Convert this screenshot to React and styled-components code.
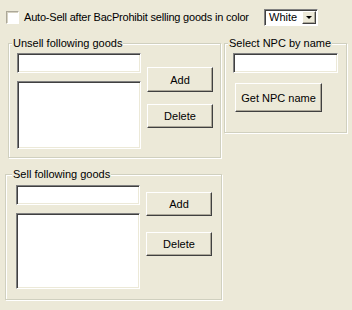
import React from 'react';
import styled, { createGlobalStyle } from 'styled-components';

const GlobalStyle = createGlobalStyle`
  html, body {
    margin: 0;
    padding: 0;
    background: #ece9d8;
  }
  body {
    font-family: "Liberation Sans", Arial, sans-serif;
    font-size: 11px;
    color: #000;
  }
`;

const Window = styled.div`
  width: 352px;
  height: 310px;
  background: #ece9d8;
  display: flex;
  flex-direction: column;
  box-sizing: border-box;
  overflow: hidden;
`;

const TopRow = styled.div`
  display: flex;
  align-items: center;
  height: 18px;
  margin-top: 8px;
  padding-left: 6px;
`;

const CheckBox = styled.div`
  flex-shrink: 0;
  width: 11px;
  height: 11px;
  background: #fff;
  border-top: 1px solid #aca899;
  border-left: 1px solid #aca899;
  border-right: 1px solid #fff;
  border-bottom: 1px solid #fff;
  box-shadow: inset 1px 1px 0 #d6d2c2;
`;

const Label = styled.span`
  flex-shrink: 0;
  margin-left: 5px;
  width: 240px;
  white-space: nowrap;
  font-size: 11px;
  letter-spacing: -0.2px;
`;

const Combo = styled.div`
  flex-shrink: 0;
  width: 48px;
  height: 15px;
  background: #fff;
  border-top: 1px solid #808080;
  border-left: 1px solid #808080;
  border-right: 1px solid #fff;
  border-bottom: 1px solid #fff;
  box-shadow: inset 1px 1px 0 #404040;
  display: flex;
  align-items: center;
  justify-content: space-between;
  padding-left: 4px;
`;

const ComboArrow = styled.div`
  width: 14px;
  height: 13px;
  margin: 1px 1px 0 0;
  background: #ece9d8;
  box-sizing: border-box;
  border-top: 1px solid #fff;
  border-left: 1px solid #fff;
  border-right: 1px solid #404040;
  border-bottom: 1px solid #404040;
  box-shadow: inset -1px -1px 0 #aca899;
  display: flex;
  align-items: center;
  justify-content: center;
  &::after {
    content: '';
    border-left: 3px solid transparent;
    border-right: 3px solid transparent;
    border-top: 3px solid #000;
  }
`;

const MiddleRow = styled.div`
  display: flex;
  align-items: flex-start;
  margin-top: 17px;
`;

const Group = styled.div`
  position: relative;
  box-sizing: border-box;
  width: ${p => p.$w}px;
  height: ${p => p.$h}px;
  margin-left: ${p => p.$left}px;
  margin-top: ${p => p.$top || 0}px;
  border: 1px solid #d0d0bf;
  box-shadow: inset 1px 1px 0 #fff, 1px 1px 0 #fff;
  padding: ${p => p.$pad};
  display: flex;
  gap: ${p => p.$gap || 0}px;
`;

const Legend = styled.span`
  position: absolute;
  top: -8px;
  left: ${p => p.$x}px;
  padding: 0 1px;
  background: #ece9d8;
  font-size: 11px;
  line-height: 14px;
  white-space: nowrap;
`;

const Column = styled.div`
  display: flex;
  flex-direction: column;
  align-items: flex-start;
  gap: ${p => p.$gap}px;
  padding-top: ${p => p.$top || 0}px;
`;

const Sunken = styled.div`
  box-sizing: border-box;
  width: ${p => p.$w}px;
  height: ${p => p.$h}px;
  background: #fff;
  border-top: 1px solid #808080;
  border-left: 1px solid #808080;
  border-right: 1px solid #fff;
  border-bottom: 1px solid #fff;
  box-shadow: inset 1px 1px 0 #404040, inset -1px -1px 0 #ece9d8;
`;

const Button = styled.button`
  box-sizing: border-box;
  width: ${p => p.$w}px;
  height: ${p => p.$h}px;
  margin: 0 0 0 ${p => p.$indent || 0}px;
  padding: 0;
  background: #ece9d8;
  border-top: 1px solid #fff;
  border-left: 1px solid #fff;
  border-right: 1px solid #404040;
  border-bottom: 1px solid #404040;
  box-shadow: inset -1px -1px 0 #aca899;
  font-family: "Liberation Sans", Arial, sans-serif;
  font-size: 11px;
  color: #000;
`;

const GoodsGroup = ({ title, w, h, left, top, pad, legendX, inputW, listH, gapList, btnLeft, btnTop, btnGap, addH }) => (
  <Group $w={w} $h={h} $left={left} $top={top} $pad={pad} $gap={btnLeft}>
    <Legend $x={legendX}>{title}</Legend>
    <Column $gap={gapList}>
      <Sunken $w={inputW} $h={20} />
      <Sunken $w={inputW} $h={listH} />
    </Column>
    <Column $gap={btnGap} $top={btnTop}>
      <Button $w={66} $h={addH}>Add</Button>
      <Button $w={66} $h={24}>Delete</Button>
    </Column>
  </Group>
);

const App = () => (
  <Window>
    <GlobalStyle />
    <TopRow>
      <CheckBox />
      <Label>Auto-Sell after BacProhibit selling goods in color</Label>
      <Combo>
        White
        <ComboArrow />
      </Combo>
    </TopRow>
    <MiddleRow>
      <GoodsGroup
        title="Unsell following goods"
        w={213} h={115} left={8} pad="9px 0 0 8px" legendX={3}
        inputW={124} listH={68} gapList={8}
        btnLeft={6} btnTop={14} btnGap={12} addH={25}
      />
      <Group $w={123} $h={90} $left={3} $pad="9px 0 0 8px">
        <Legend $x={3}>Select NPC by name</Legend>
        <Column $gap={10}>
          <Sunken $w={105} $h={20} />
          <Button $w={87} $h={29} $indent={2}>Get NPC name</Button>
        </Column>
      </Group>
    </MiddleRow>
    <GoodsGroup
      title="Sell following goods"
      w={217} h={126} left={5} top={16} pad="10px 0 0 10px" legendX={6}
      inputW={124} listH={76} gapList={8}
      btnLeft={6} btnTop={7} btnGap={16} addH={24}
    />
  </Window>
);

export default App;
